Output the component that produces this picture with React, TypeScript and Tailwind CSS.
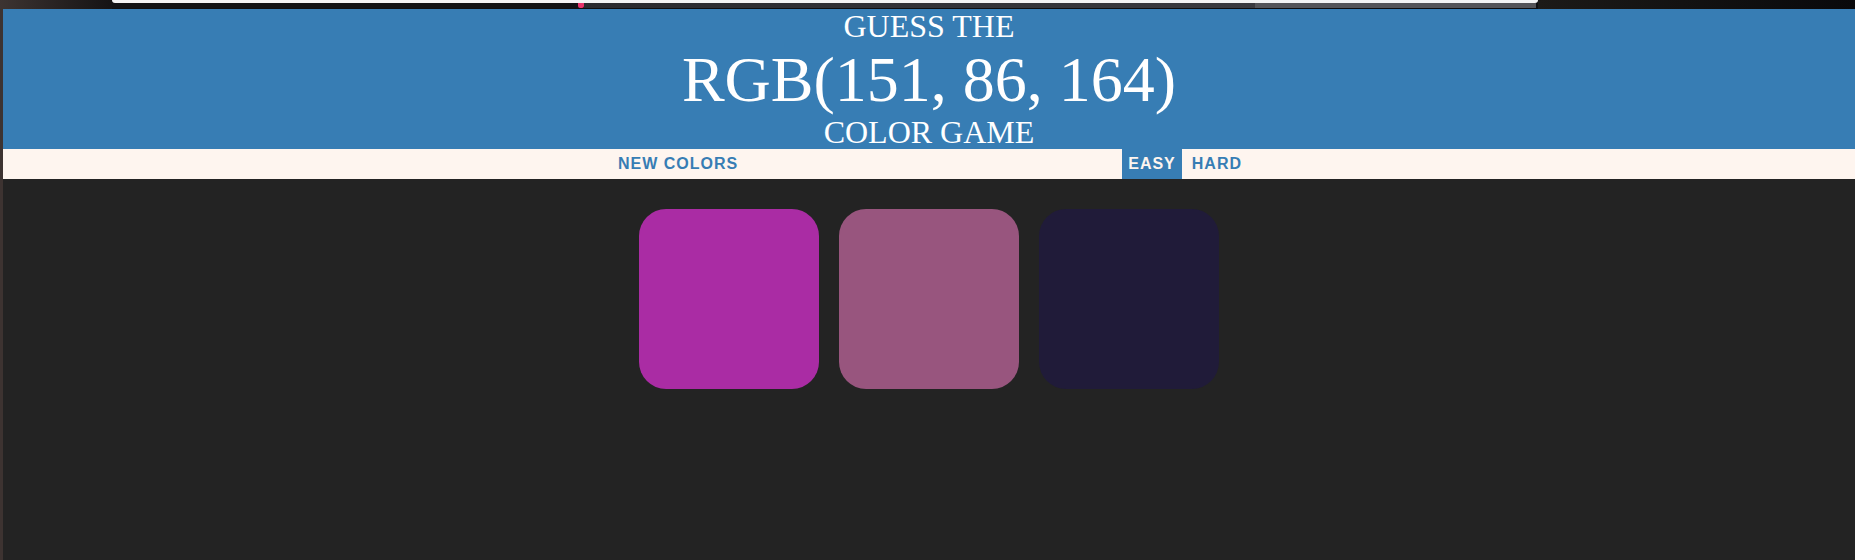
import { useState } from 'react';

// 게임에 나오는 색 (원본 화면 값)
const squareColors = ['#aa2ca4', '#98557e', '#201b39'];
const targetColor = 'RGB(151, 86, 164)';

function TopStrip() {
  // 스크린샷 상단의 창 테두리 부분
  return (
    <div className="flex h-[9px] w-full bg-[#0e0e10]">
      <div className="w-[112px] bg-gradient-to-r from-[#3d3432] to-[#151314]" />
      <div className="flex w-[1426px] flex-col">
        <div className="h-[3px] rounded-b-[4px] bg-[#f4f4f4]" />
        <div className="flex h-[5px]">
          <div className="w-[466px] bg-[#121214]" />
          <div className="w-[6px] rounded-b-[2px] bg-[#e8336b]" />
          <div className="w-[671px] bg-gradient-to-r from-[#2a2a2e] to-[#3a3a3f]" />
          <div className="w-[281px] bg-[#545458]" />
        </div>
      </div>
      <div className="flex-1 bg-gradient-to-r from-[#1c1a18] to-[#09090b]" />
    </div>
  );
}

export default function App() {
  const [mode, setMode] = useState<'easy' | 'hard'>('easy');

  return (
    <div className="flex min-h-screen w-full flex-col bg-[#232323]">
      <TopStrip />
      <div className="flex flex-1">
        <div className="w-[3px] bg-[#3d3331]" />
        <div className="flex flex-1 flex-col">
          <h1 className="flex flex-col items-center bg-[#377db4] text-white font-['Liberation_Serif',serif] font-normal uppercase">
            <span className="text-[32px] leading-[35px]">Guess the</span>
            <span className="text-[64px] leading-[71px]">{targetColor}</span>
            <span className="text-[32px] leading-[34px]">Color Game</span>
          </h1>

          <div className="flex h-[30px] justify-center gap-[4px] bg-[#fef5ef] pl-[2px] font-['Liberation_Sans',Arial,sans-serif] text-[16px] font-bold uppercase tracking-[1px] text-[#377db4]">
            <button className="h-full px-[6px] uppercase">New Colors</button>
            <span className="w-[20%]" />
            <button
              className={mode === 'easy' ? 'h-full bg-[#377db4] px-[6px] uppercase text-[#fef5ef]' : 'h-full px-[6px] uppercase'}
              onClick={() => setMode('easy')}
            >
              Easy
            </button>
            <button
              className={mode === 'hard' ? 'h-full bg-[#377db4] px-[6px] uppercase text-[#fef5ef]' : 'h-full px-[6px] uppercase'}
              onClick={() => setMode('hard')}
            >
              Hard
            </button>
          </div>

          <div className="mx-auto mt-[20px] flex w-[600px]">
            {squareColors.map((c) => (
              <div
                key={c}
                className="m-[10px] h-[180px] w-[180px] rounded-[27px]"
                style={{ backgroundColor: c }}
              />
            ))}
          </div>
        </div>
      </div>
    </div>
  );
}
